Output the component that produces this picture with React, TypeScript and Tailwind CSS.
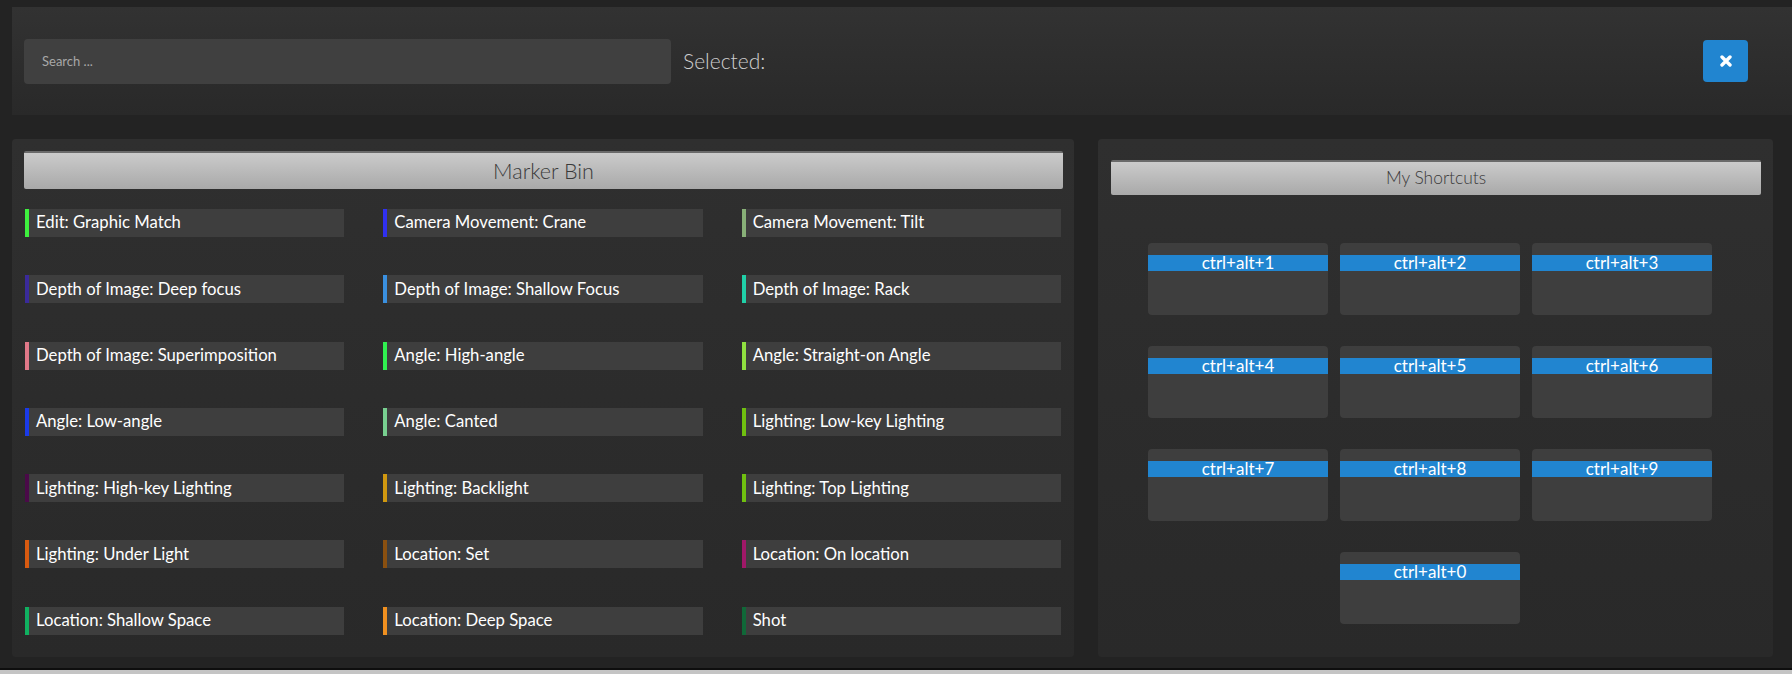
import React from "react";

type Marker = { label: string; color: string };

const markers: Marker[] = [
  { label: "Edit: Graphic Match", color: "#3ef03e" },
  { label: "Camera Movement: Crane", color: "#3030f0" },
  { label: "Camera Movement: Tilt", color: "#88b078" },
  { label: "Depth of Image: Deep focus", color: "#3a2a9a" },
  { label: "Depth of Image: Shallow Focus", color: "#3a90e0" },
  { label: "Depth of Image: Rack", color: "#20d0a8" },
  { label: "Depth of Image: Superimposition", color: "#e07888" },
  { label: "Angle: High-angle", color: "#30f050" },
  { label: "Angle: Straight-on Angle", color: "#90e040" },
  { label: "Angle: Low-angle", color: "#1a3ae8" },
  { label: "Angle: Canted", color: "#78d090" },
  { label: "Lighting: Low-key Lighting", color: "#70c010" },
  { label: "Lighting: High-key Lighting", color: "#4a0a48" },
  { label: "Lighting: Backlight", color: "#d09810" },
  { label: "Lighting: Top Lighting", color: "#70c010" },
  { label: "Lighting: Under Light", color: "#d85a10" },
  { label: "Location: Set", color: "#8a5010" },
  { label: "Location: On location", color: "#a01868" },
  { label: "Location: Shallow Space", color: "#10b060" },
  { label: "Location: Deep Space", color: "#f09020" },
  { label: "Shot", color: "#106838" },
];

const shortcuts = ["1", "2", "3", "4", "5", "6", "7", "8", "9", "0"];

const PanelHeader = ({ title, big }: { title: string; big?: boolean }) => (
  <div
    className={
      "flex items-center justify-center rounded-[2px] border-t-2 border-[#6a6a6a] bg-linear-to-b from-[#cbcbcb] to-[#a9a9a9] font-light text-[#3a3a3a] " +
      (big ? "h-[38px] text-[21.5px]" : "h-[35px] text-[17.4px]")
    }
  >
    {title}
  </div>
);

const CloseIcon = () => (
  <svg width="12" height="12" viewBox="0 0 12 12">
    <path
      d="M2 2 L10 10 M10 2 L2 10"
      stroke="white"
      strokeWidth="3.4"
      strokeLinecap="round"
    />
  </svg>
);

export default function App() {
  return (
    <div className="flex h-[674px] flex-col overflow-hidden bg-[#232323] font-['Lato','Open_Sans',sans-serif]">
      <div className="flex-1">
        {/* search bar */}
        <div className="ml-[12px] mt-[7px] flex h-[108px] items-center bg-linear-to-b from-[#323232] to-[#292929] pl-[12px]">
          <input
            placeholder="Search ..."
            className="h-[45px] w-[647px] rounded-[4px] bg-[#404040] pl-[18px] text-[13px] text-white outline-none placeholder:text-[#a8a8a8]"
          />
          <span className="ml-[12px] text-[21px] font-light text-[#cfcfcf]">
            Selected:
          </span>
          <button className="ml-auto mr-[44px] flex h-[42px] w-[45px] items-center justify-center rounded-[4px] bg-[#2185d0]">
            <CloseIcon />
          </button>
        </div>

        <div className="mt-[24px] flex gap-[24px] pl-[12px]">
          {/* marker bin */}
          <div className="h-[518px] w-[1062px] rounded-[4px] bg-linear-to-b from-[#2f2f2f] to-[#292929] pt-[12px]">
            <div className="pl-[12px] pr-[11px]">
              <PanelHeader title="Marker Bin" big />
            </div>
            <div className="mt-[20px] grid grid-cols-3 gap-x-[39px] gap-y-[38.3px] px-[13px]">
              {markers.map((m) => (
                <div
                  key={m.label}
                  className="flex h-[28px] items-center bg-[#3e3e3e]"
                >
                  <div
                    className="h-full w-[4px]"
                    style={{ backgroundColor: m.color }}
                  />
                  <span className="pl-[7px] text-[16.7px] text-white">
                    {m.label}
                  </span>
                </div>
              ))}
            </div>
          </div>

          {/* shortcuts */}
          <div className="h-[518px] w-[675px] rounded-[4px] bg-linear-to-b from-[#2f2f2f] to-[#292929] pt-[21px]">
            <div className="pl-[13px] pr-[12px]">
              <PanelHeader title="My Shortcuts" />
            </div>
            <div className="ml-[50px] mt-[48px] flex w-[564px] flex-wrap justify-center gap-x-[12px] gap-y-[31px]">
              {shortcuts.map((k) => (
                <div
                  key={k}
                  className="h-[72px] w-[180px] rounded-[4px] bg-[#3e3e3e] pt-[12px]"
                >
                  <div className="h-[16px] bg-[#2185d0] text-center text-[17px] leading-[16px] text-white">
                    ctrl+alt+{k}
                  </div>
                </div>
              ))}
            </div>
          </div>
        </div>
      </div>
      <div className="h-[2px] bg-[#0e0e0e]" />
      <div className="h-[4px] bg-[#c4c4c4]" />
    </div>
  );
}
